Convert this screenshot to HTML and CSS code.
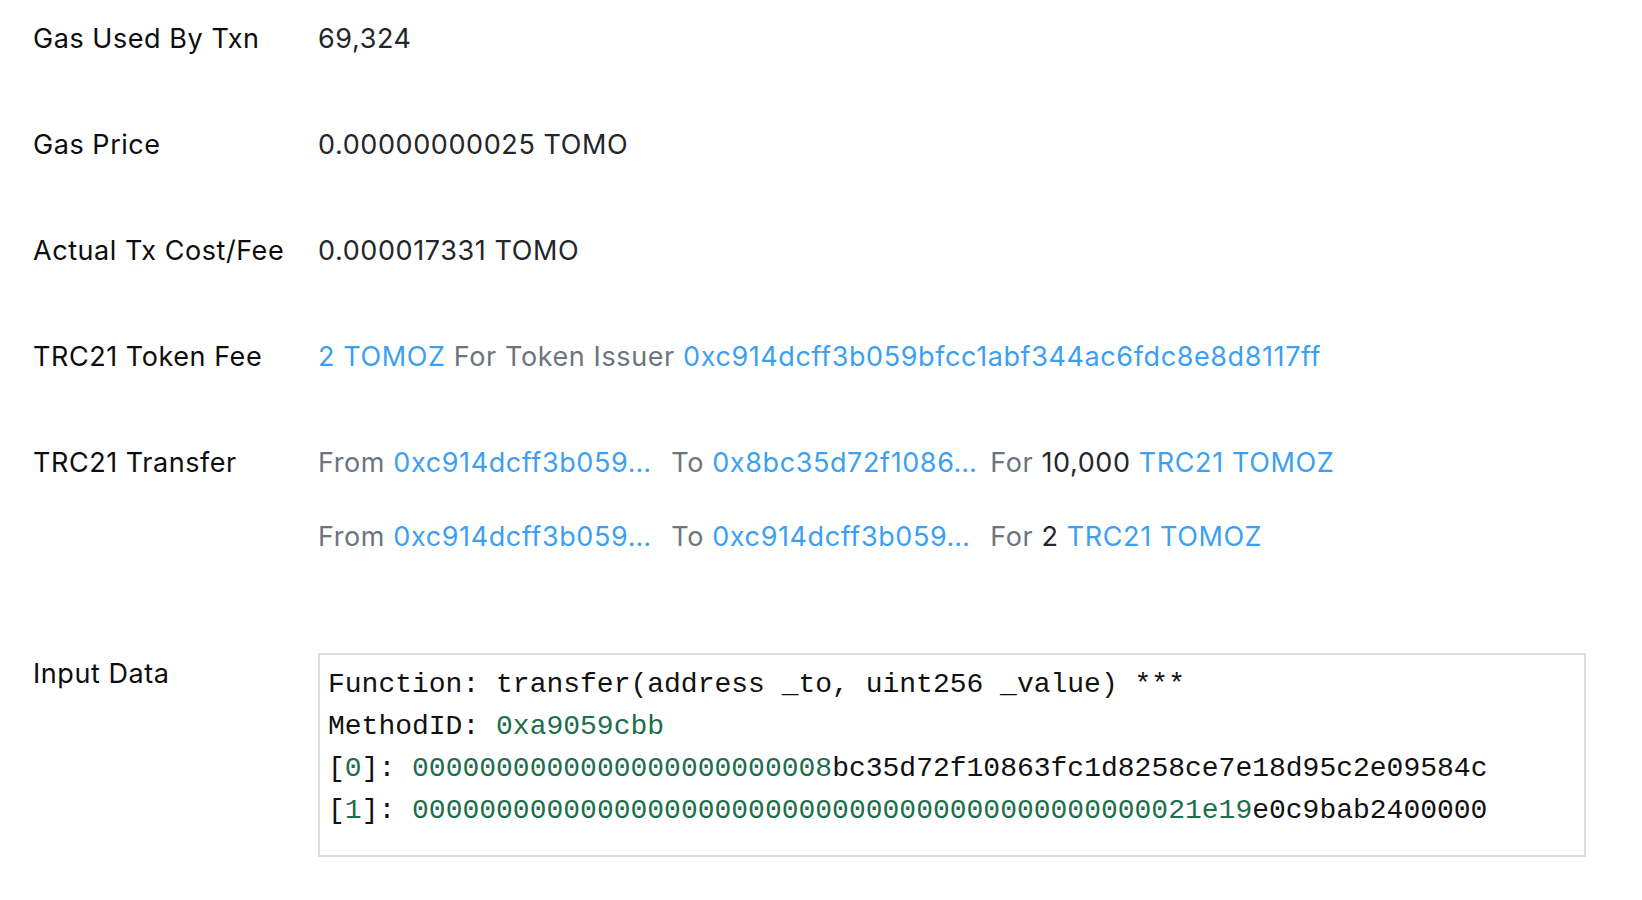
FILE: index.html
```html
<!DOCTYPE html>
<html lang="en">
<head>
<meta charset="utf-8">
<title>Transaction details</title>
<link rel="stylesheet" href="styles.css">
</head>
<body>
<div class="details">
  <div class="row">
    <div class="label">Gas Used By Txn</div>
    <div class="value">69,324</div>
  </div>
  <div class="row">
    <div class="label">Gas Price</div>
    <div class="value">0.00000000025 TOMO</div>
  </div>
  <div class="row">
    <div class="label">Actual Tx Cost/Fee</div>
    <div class="value">0.000017331 TOMO</div>
  </div>
  <div class="row">
    <div class="label">TRC21 Token Fee</div>
    <div class="value"><a class="link">2 TOMOZ</a> <span class="muted">For Token Issuer</span> <a class="link">0xc914dcff3b059bfcc1abf344ac6fdc8e8d8117ff</a></div>
  </div>
  <div class="row row-transfer">
    <div class="label">TRC21 Transfer</div>
    <div class="value transfers">
      <div class="transfer">
        <span class="muted">From</span> <a class="link addr">0xc914dcff3b059…</a><span class="muted">To</span> <a class="link addr">0x8bc35d72f1086…</a><span class="muted">For</span> <span>10,000</span> <a class="link">TRC21 TOMOZ</a>
      </div>
      <div class="transfer">
        <span class="muted">From</span> <a class="link addr">0xc914dcff3b059…</a><span class="muted">To</span> <a class="link addr">0xc914dcff3b059…</a><span class="muted">For</span> <span>2</span> <a class="link">TRC21 TOMOZ</a>
      </div>
    </div>
  </div>
  <div class="row row-input">
    <div class="label">Input Data</div>
    <div class="value">
      <pre class="input-data">Function: transfer(address _to, uint256 _value) ***
MethodID: <span class="hl">0xa9059cbb</span>
[<span class="hl">0</span>]: <span class="hl">0000000000000000000000008</span>bc35d72f10863fc1d8258ce7e18d95c2e09584c
[<span class="hl">1</span>]: <span class="hl">00000000000000000000000000000000000000000000021e19</span>e0c9bab2400000</pre>
    </div>
  </div>
</div>
</body>
</html>
```
FILE: styles.css
```css
html, body {
  margin: 0;
  padding: 0;
  background: #ffffff;
}

body {
  font-family: Inter, "Noto Sans", "Liberation Sans", sans-serif;
  font-size: 27px;
  letter-spacing: 0.6px;
  color: #212529;
}

.details {
  display: flex;
  flex-direction: column;
  padding: 19px 56px 0 33px;
}

.row {
  display: grid;
  grid-template-columns: 285px 1fr;
  line-height: 40px;
  margin-bottom: 66px;
}

.row-transfer {
  margin-bottom: 96px;
}

.row-input .label {
  padding-top: 1px;
}

.label {
  color: #0d0d0d;
  letter-spacing: 0.55px;
}

.value {
  color: #23272b;
  white-space: nowrap;
}

.muted {
  color: #6c757d;
}

.link {
  color: #3d9ff2;
  text-decoration: none;
}

.transfers {
  display: flex;
  flex-direction: column;
  gap: 34px;
}

.addr {
  display: inline-block;
  width: 278px;
}

.input-data {
  margin: 0;
  border: 2px solid #dcdcdc;
  padding: 9px 8px 23px 8px;
  font-family: "Liberation Mono", "Courier New", monospace;
  font-size: 28px;
  letter-spacing: 0;
  line-height: 42px;
  color: #111111;
}

.hl {
  color: #1d6e4c;
}
```
